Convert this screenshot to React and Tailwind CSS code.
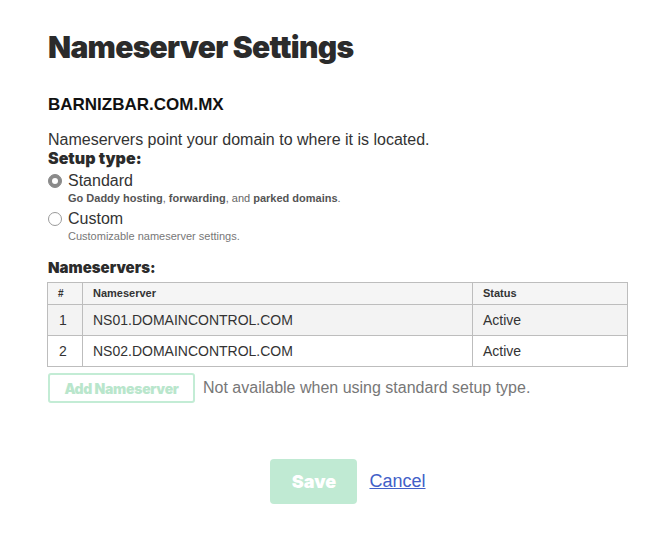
import React from 'react';

const heavy = { fontFamily: 'Inter, Lato, "Noto Sans", sans-serif' };

const servers = [
  { id: 1, name: 'NS01.DOMAINCONTROL.COM', status: 'Active' },
  { id: 2, name: 'NS02.DOMAINCONTROL.COM', status: 'Active' },
];

const Radio = ({ checked }) => (
  <span
    className={`inline-flex items-center justify-center w-[14px] h-[14px] rounded-full border ${
      checked ? 'border-[#8a8a8a] bg-[#8a8a8a]' : 'border-[#9a9a9a] bg-white'
    }`}
  >
    {checked && <span className="w-[6px] h-[6px] rounded-full bg-white" />}
  </span>
);

const App = () => {
  return (
    <div className="min-h-screen bg-white text-[#333] font-['Liberation_Sans',Arial,sans-serif] px-[48px] pt-[27px]">
      <h1 className="text-[30px] leading-[40px] font-black text-[#2b2b2b] tracking-[-0.7px]" style={heavy}>
        Nameserver Settings
      </h1>

      <h2 className="mt-[28px] text-[17px] leading-[20px] font-bold text-[#111]">BARNIZBAR.COM.MX</h2>

      <p className="mt-[15px] text-[16px] leading-[19px] text-[#333]">
        Nameservers point your domain to where it is located.
      </p>
      <div className="text-[16px] leading-[19px] font-black text-[#2b2b2b]" style={heavy}>
        Setup type:
      </div>

      {/* Radios */}
      <div className="mt-[3px]">
        <label className="flex items-center gap-[6px] text-[16px] leading-[20px] text-[#333]">
          <Radio checked />
          Standard
        </label>
        <p className="ml-[20px] text-[11px] leading-[14px] text-[#666]">
          <b className="text-[#555]">Go Daddy hosting</b>, <b className="text-[#555]">forwarding</b>, and{' '}
          <b className="text-[#555]">parked domains</b>.
        </p>
        <label className="mt-[4px] flex items-center gap-[6px] text-[16px] leading-[20px] text-[#333]">
          <Radio />
          Custom
        </label>
        <p className="ml-[20px] text-[11px] leading-[14px] text-[#777]">Customizable nameserver settings.</p>
      </div>

      <div className="mt-[16px] text-[15px] leading-[18px] font-black text-[#2b2b2b]" style={heavy}>
        Nameservers:
      </div>

      <table className="mt-[5px] ml-[-1px] w-[581px] border-collapse border border-[#bdbdbd] text-left">
        <thead>
          <tr className="bg-[#f5f5f5] h-[22px]">
            <th className="w-[35px] border border-[#bdbdbd] px-[10px] text-[10px] font-bold text-[#333]">#</th>
            <th className="w-[390px] border border-[#bdbdbd] px-[10px] text-[11px] font-bold text-[#333]">Nameserver</th>
            <th className="border border-[#bdbdbd] px-[10px] text-[11px] font-bold text-[#333]">Status</th>
          </tr>
        </thead>
        <tbody>
          {servers.map((s, i) => (
            <tr key={s.id} className={`h-[31px] ${i === 0 ? 'bg-[#f3f3f3]' : 'bg-white'}`}>
              <td className="border border-[#bdbdbd] px-[11px] text-[14px] text-[#333]">{s.id}</td>
              <td className="border border-[#bdbdbd] px-[10px] text-[14px] text-[#333]">{s.name}</td>
              <td className="border border-[#bdbdbd] px-[10px] text-[14px] text-[#333]">{s.status}</td>
            </tr>
          ))}
        </tbody>
      </table>

      <div className="mt-[6px] flex items-center gap-[8px]">
        <button
          disabled
          className="w-[147px] h-[30px] rounded-[3px] border-2 border-[#c3ecd5] bg-white text-[14px] font-black text-[#b9e6cc] tracking-[-0.3px]"
          style={heavy}
        >
          Add Nameserver
        </button>
        <span className="text-[16px] text-[#777]">Not available when using standard setup type.</span>
      </div>

      <div className="mt-[56px] flex items-center justify-center gap-[12px] pl-[25px]">
        <button
          disabled
          className="w-[87px] h-[45px] rounded-[4px] bg-[#c0ead3] text-[18px] font-black text-white"
          style={heavy}
        >
          Save
        </button>
        <a href="#" className="text-[18px] text-[#4260c8] underline">
          Cancel
        </a>
      </div>
    </div>
  );
};

export default App;
